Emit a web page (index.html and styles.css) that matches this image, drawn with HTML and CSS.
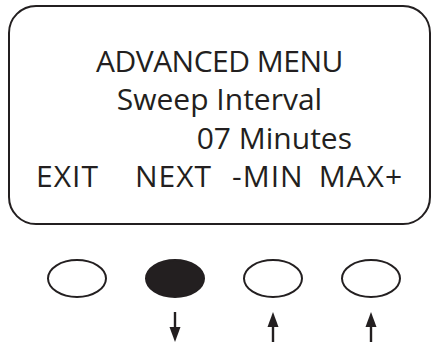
FILE: index.html
```html
<!DOCTYPE html>
<html lang="en">
<head>
  <meta charset="UTF-8">
  <meta name="viewport" content="width=device-width, initial-scale=1.0">
  <title>Advanced Menu</title>
  <link rel="stylesheet" href="styles.css">
</head>
<body>

  <div class="display">
    <div class="line title">ADVANCED MENU</div>
    <div class="line">Sweep Interval</div>
    <div class="line value">07 Minutes</div>
    <div class="line softkeys">
      <span class="key-exit">EXIT</span>
      <span class="key-next">NEXT</span>
      <span class="key-min">-MIN</span>
      <span class="key-max">MAX+</span>
    </div>
  </div>

  <div class="keypad">
    <div class="key">
      <div class="button"></div>
      <div class="arrow"></div>
    </div>
    <div class="key">
      <div class="button pressed"></div>
      <svg class="arrow" width="14" height="30" viewBox="0 0 14 30">
        <line x1="7" y1="0" x2="7" y2="18" stroke="#231f20" stroke-width="2.4"/>
        <polygon points="7,30 12.5,15 1.5,15" fill="#231f20"/>
      </svg>
    </div>
    <div class="key">
      <div class="button"></div>
      <svg class="arrow" width="14" height="30" viewBox="0 0 14 30">
        <line x1="7" y1="12" x2="7" y2="30" stroke="#231f20" stroke-width="2.4"/>
        <polygon points="7,0 12.5,15 1.5,15" fill="#231f20"/>
      </svg>
    </div>
    <div class="key">
      <div class="button"></div>
      <svg class="arrow" width="14" height="30" viewBox="0 0 14 30">
        <line x1="7" y1="12" x2="7" y2="30" stroke="#231f20" stroke-width="2.4"/>
        <polygon points="7,0 12.5,15 1.5,15" fill="#231f20"/>
      </svg>
    </div>
  </div>

</body>
</html>
```

FILE: styles.css
```css
body {
  margin: 0;
  padding: 0;
  background-color: #fff;
  color: #231f20;
  font-family: "Open Sans", "Noto Sans", sans-serif;
}

.display {
  box-sizing: border-box;
  width: 423px;
  height: 220px;
  margin: 5px 0 0 8px;
  padding-top: 35px;
  border: 2.5px solid #231f20;
  border-radius: 28px;
}

.line {
  font-size: 30px;
  line-height: 38.3px;
  text-align: center;
  white-space: nowrap;
}

.title {
  letter-spacing: -0.5px;
}

.value {
  text-align: right;
  padding-right: 77px;
}

.softkeys {
  display: flex;
  text-align: left;
  padding-left: 26px;
  letter-spacing: 1px;
}

.key-next {
  margin-left: 36px;
}

.key-min {
  margin-left: 20px;
}

.key-max {
  margin-left: 15px;
}

.keypad {
  display: flex;
  gap: 38px;
  margin: 34px 0 0 47px;
}

.key {
  display: flex;
  flex-direction: column;
  align-items: center;
  width: 60px;
}

.button {
  box-sizing: border-box;
  width: 60px;
  height: 39px;
  border: 2.5px solid #231f20;
  border-radius: 50%;
}

.button.pressed {
  background-color: #231f20;
}

.arrow {
  display: block;
  width: 14px;
  height: 30px;
  margin-top: 14px;
}
```
